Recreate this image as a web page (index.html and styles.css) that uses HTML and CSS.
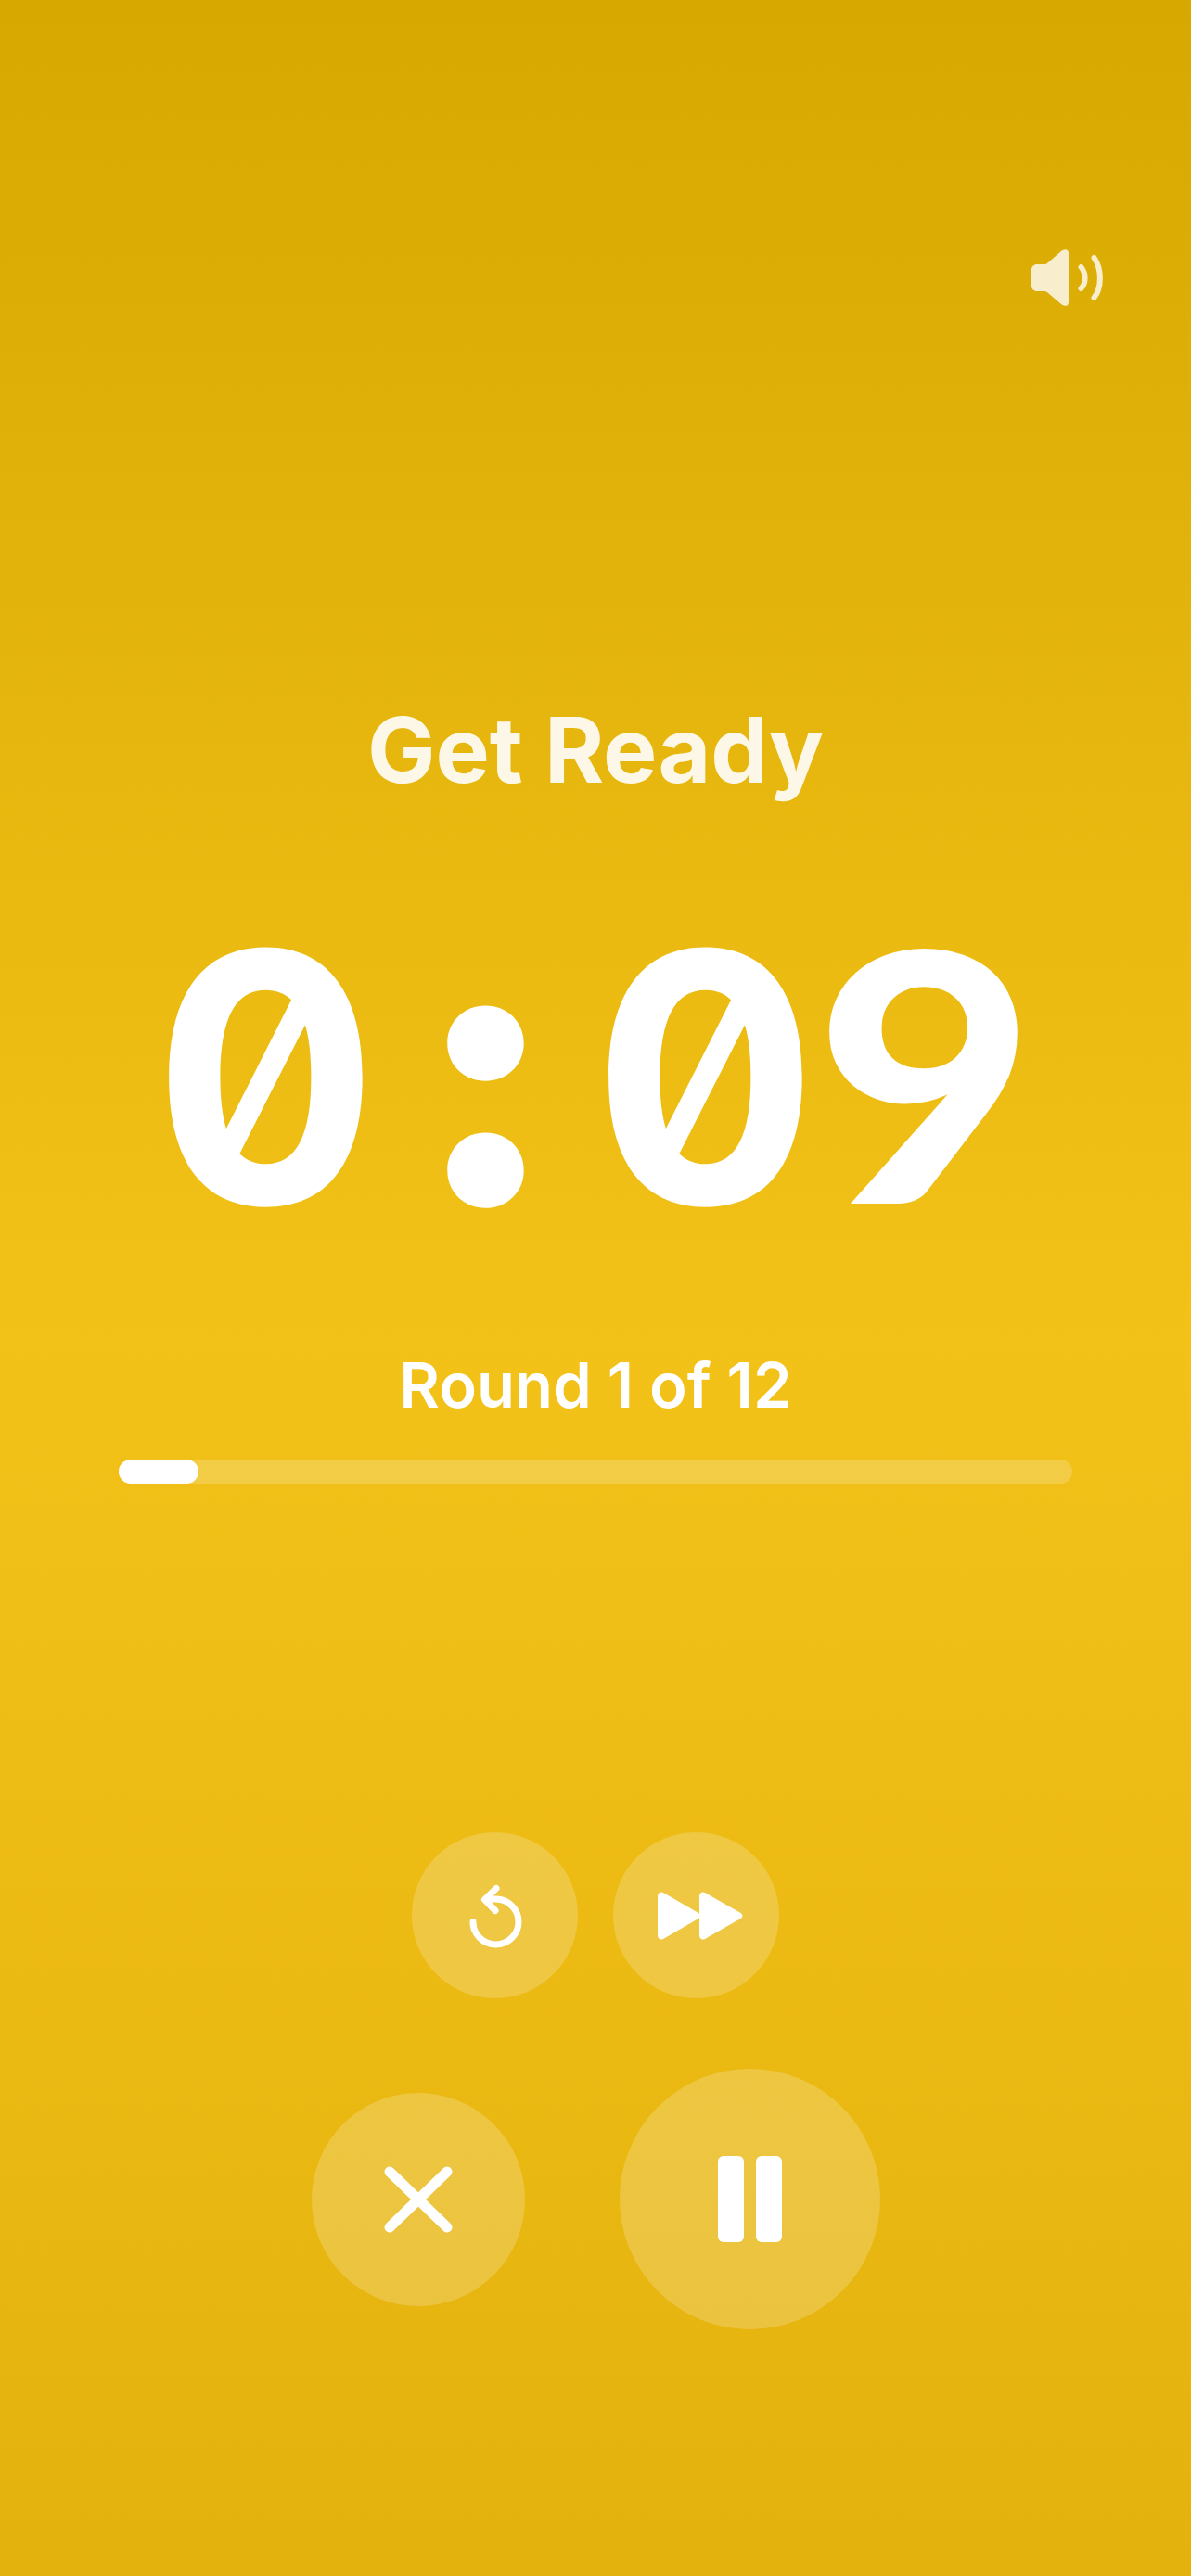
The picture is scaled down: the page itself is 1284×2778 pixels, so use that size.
FILE: index.html
```html
<!DOCTYPE html>
<html lang="en">
<head>
    <meta charset="UTF-8">
    <meta name="viewport" content="width=device-width, initial-scale=1.0">
    <title>Interval Timer</title>
    <link rel="stylesheet" href="styles.css">
</head>
<body>
    <div class="screen">
        <div class="top-bar">
            <svg class="sound-icon" width="80" height="64" viewBox="0 0 80 64">
                <path d="M9 17H17C18 17 19.500 16.500 20.500 15.500L35 3C38 0.500 43 0 43 5V58C43 63 38 62.500 35 60L20.500 47.500C19.500 46.500 18 46 17 46H9C5.500 46 3 43.500 3 40V23C3 19.500 5.500 17 9 17Z" fill="#fff"/>
                <path d="M56.500 20C62 27 62 37 56.500 43" stroke="#fff" stroke-width="6" stroke-linecap="round" fill="none"/>
                <path d="M70.500 10C79 22 79 42 70.500 53" stroke="#fff" stroke-width="6" stroke-linecap="round" fill="none"/>
            </svg>
        </div>
        <div class="phase">Get Ready</div>
        <div class="timer">
            <span class="digit">0</span><span class="digit colon">:</span><span class="digit">0</span><span class="digit nine">9</span>
        </div>
        <div class="round">Round 1 of 12</div>
        <div class="progress">
            <div class="progress-fill"></div>
        </div>
        <div class="controls">
            <div class="small-row">
                <button class="btn btn-small" type="button">
                    <svg width="64" height="72" viewBox="0 0 64 72" fill="none" stroke="#fff" stroke-width="7" stroke-linecap="round" stroke-linejoin="round">
                        <path d="M22 18H32.500A24.500 24.500 0 1 1 8 42.500"/>
                        <path d="M33 6.500L20.500 18.500L32 30.500"/>
                    </svg>
                </button>
                <button class="btn btn-small" type="button">
                    <svg class="skip-icon" width="92" height="52" viewBox="0 0 92 52" fill="#fff">
                        <path d="M0 5C0 1 3.500 -0.500 6 1L44 23C46.500 24.500 46.500 27.500 44 29L6 51C3.500 52.500 0 51 0 47Z"/>
                        <path d="M45 5C45 1 48.500 -0.500 51 1L89.500 23C92 24.500 92 27.500 89.500 29L51 51C48.500 52.500 45 51 45 47Z"/>
                    </svg>
                </button>
            </div>
            <div class="main-row">
                <button class="btn btn-close" type="button">
                    <svg width="74" height="72" viewBox="0 0 74 72" fill="none" stroke="#fff" stroke-width="11" stroke-linecap="round">
                        <path d="M6 6L68 66"/>
                        <path d="M68 6L6 66"/>
                    </svg>
                </button>
                <button class="btn btn-pause" type="button">
                    <span class="pause-bar"></span>
                    <span class="pause-bar"></span>
                </button>
            </div>
        </div>
    </div>
</body>
</html>
```

FILE: styles.css
```css
body {
    margin: 0;
    padding: 0;
    font-family: Inter, "Liberation Sans", sans-serif;
    color: white;
}
.screen {
    width: 1284px;
    height: 2778px;
    background: linear-gradient(180deg, #d6a800 0%, #f3c219 52%, #e4b20d 100%);
    display: flex;
    flex-direction: column;
    align-items: center;
    overflow: hidden;
}
.top-bar {
    width: 100%;
    box-sizing: border-box;
    display: flex;
    justify-content: flex-end;
    padding: 268px 95px 0 0;
}
.sound-icon {
    display: block;
    opacity: 0.8;
}
.phase {
    margin-top: 413px;
    font-size: 98px;
    line-height: 128px;
    font-weight: 700;
    opacity: 0.9;
}
.timer {
    margin-top: 76px;
    display: flex;
    align-items: baseline;
    font-size: 375px;
    line-height: 400px;
    font-weight: 700;
    font-feature-settings: "zero", "tnum";
}
.digit {
    width: 237px;
    display: flex;
    justify-content: center;
}
.colon {
    font-weight: 900;
    font-size: 410px;
}
.nine {
    font-family: Lato, sans-serif;
    font-weight: 900;
    transform: scaleX(1.09);
}
.round {
    margin-top: 92px;
    font-size: 67px;
    line-height: 80px;
    font-weight: 600;
}
.progress {
    margin-top: 40px;
    width: 1028px;
    height: 26px;
    border-radius: 13px;
    background-color: rgba(255, 255, 255, 0.2);
}
.progress-fill {
    width: 86px;
    height: 26px;
    border-radius: 13px;
    background-color: white;
}
.controls {
    margin-top: 376px;
    display: flex;
    flex-direction: column;
    align-items: center;
    gap: 76px;
}
.small-row {
    display: flex;
    gap: 38px;
}
.skip-icon {
    margin-left: 9px;
}
.main-row {
    display: flex;
    align-items: center;
    gap: 102px;
}
.btn {
    display: flex;
    justify-content: center;
    align-items: center;
    padding: 0;
    border: none;
    border-radius: 50%;
    background-color: rgba(255, 255, 255, 0.2);
}
.btn-small {
    width: 179px;
    height: 179px;
}
.btn-close {
    width: 230px;
    height: 230px;
}
.btn-pause {
    width: 281px;
    height: 281px;
    gap: 13px;
}
.pause-bar {
    width: 28px;
    height: 93px;
    border-radius: 6px;
    background-color: white;
}
```
